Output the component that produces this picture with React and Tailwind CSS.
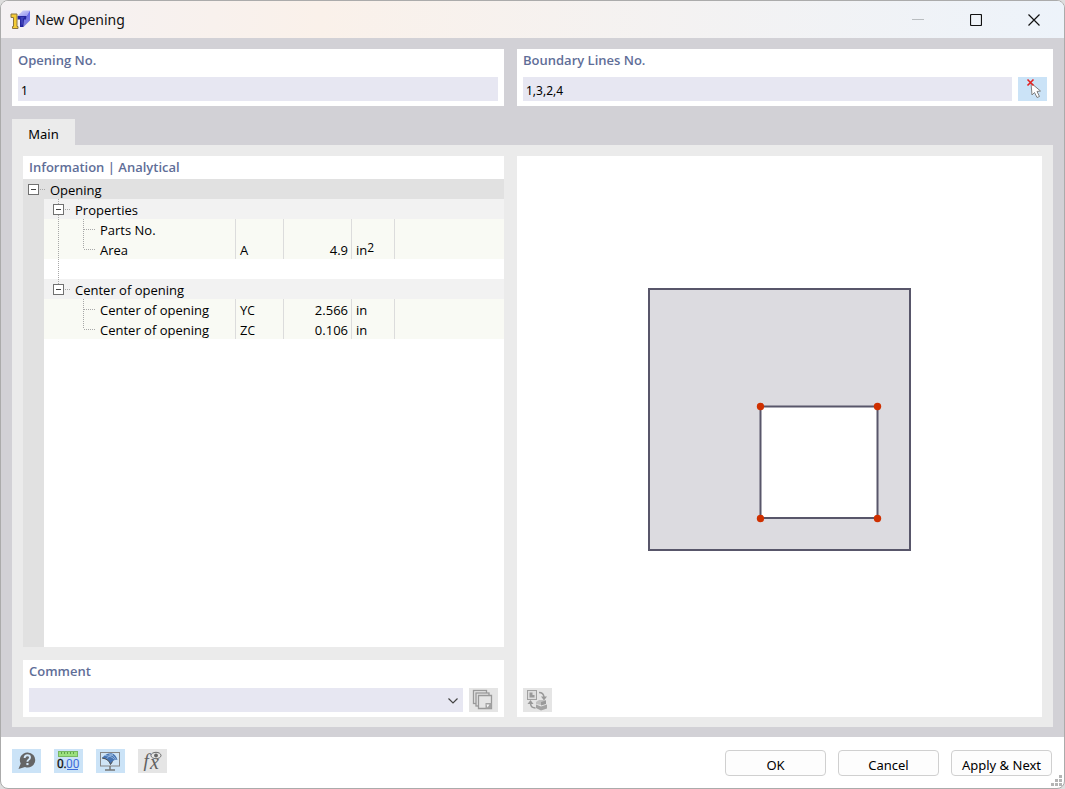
import React, { useState } from "react";

const LINE = "#a8a8a8";

function AppIcon() {
  return (
    <svg width="20" height="20" viewBox="0 0 20 20" aria-hidden="true">
      <defs>
        <linearGradient id="face" x1="0" y1="0" x2="1" y2="1">
          <stop offset="0" stopColor="#dcdcfb" />
          <stop offset="1" stopColor="#8c8dee" />
        </linearGradient>
        <linearGradient id="side" x1="0" y1="0" x2="0" y2="1">
          <stop offset="0" stopColor="#6163ea" />
          <stop offset="1" stopColor="#8586dc" />
        </linearGradient>
      </defs>
      <path d="M7.500 6 L13 0.500 H20 L16.500 6Z" fill="url(#face)" />
      <path d="M16.500 6 L20 0.500 V10.500 L13.500 17 L13.500 9Z" fill="url(#side)" />
      <path d="M7.500 6 H16.500 L16 9.500 H14 L13.500 17 H10 V9.500 H7.500Z" fill="#24249e" />
      <path d="M10.500 7 H14.500 L13 9 V14 L11.500 16Z" fill="#3e40b8" />
      <path d="M1 4 H7 V16.500 H8 V18.500 H2.500 V16.500 H3.500 V7.500 H1Z" fill="#f4cb35" stroke="#8a7440" strokeWidth="1" />
    </svg>
  );
}

function PickIcon() {
  return (
    <svg width="29" height="24" viewBox="0 0 29 24" aria-hidden="true">
      <path d="M13 6 L14 18 L16.500 15.500 L19 20.500 L21.500 19.500 L19 14.500 L22.500 14Z" fill="#fff" stroke="#808080" strokeWidth="1" />
      <path d="M9.500 2.500 L15.500 8.500 M15.500 2.500 L9.500 8.500" stroke="#e32222" strokeWidth="1.600" />
    </svg>
  );
}

function PagesIcon() {
  return (
    <svg width="29" height="24" viewBox="0 0 29 24" fill="#e5e5e5" stroke="#999" strokeWidth="1.300" aria-hidden="true">
      <rect x="4.500" y="2.500" width="13" height="13" />
      <rect x="7" y="5" width="13" height="13" />
      <path d="M9.500 7.500 H22.500 V20.500 H9.500Z" />
      <path d="M16.500 20.500 V15 H22.500 V20.500Z" fill="#a3a3a3" stroke="none" />
      <path d="M17.500 16.500 H20.500 L18.500 19.500Z" fill="#f8f8f8" stroke="none" />
    </svg>
  );
}

function SwapIcon() {
  return (
    <svg width="29" height="24" viewBox="0 0 29 24" aria-hidden="true">
      <rect x="4.500" y="2.500" width="9" height="9" fill="#ddd" stroke="#a0a0a0" />
      <path d="M6.500 4.500 V9.500 H11.500 V7 H9.500 V4.500Z" fill="#999" />
      <path d="M16 4.500 Q20.500 4.500 21 9" fill="none" stroke="#999" strokeWidth="1.500" />
      <path d="M18 8.500 H24 L21 12.500Z" fill="#999" />
      <path d="M12.500 20 Q8 20 7.500 15.500" fill="none" stroke="#999" strokeWidth="1.500" />
      <path d="M4.500 16 H10.500 L7.500 12Z" fill="#999" />
      <path d="M13 14 L16 12 H23 V15 L18 17 L13 16Z" fill="#c0c0c0" />
      <path d="M18 14 L23 12.500 V16 L18 17.500Z" fill="#999" />
      <path d="M13 16.500 L18 18.500 L24 16.500 V20.500 L18 22.500 L13 20Z" fill="#a3a3a3" />
    </svg>
  );
}

function HelpIcon() {
  return (
    <svg width="29" height="24" viewBox="0 0 29 24" aria-hidden="true">
      <path d="M15.500 3.500 a7.500 7.500 0 1 1 -2.500 14.500 L6.500 20 L8.700 14.500 A7.500 7.500 0 0 1 15.500 3.500Z" fill="#656565" />
      <path d="M12.600 9 Q12.800 6.300 15.400 6.300 Q18 6.300 18 8.600 Q18 10 16.600 10.800 Q15.400 11.500 15.400 12.800" fill="none" stroke="#d4e8f9" strokeWidth="1.900" />
      <rect x="14.400" y="14" width="2.100" height="2.100" fill="#d4e8f9" />
    </svg>
  );
}

function UnitsIcon() {
  return (
    <svg width="29" height="24" viewBox="0 0 29 24" aria-hidden="true">
      <rect x="4.500" y="2.500" width="19" height="5" fill="#9be07f" stroke="#78b862" />
      <path d="M7.500 3 V5 M10.500 3 V5 M13.500 3 V5 M16.500 3 V5 M19.500 3 V5" stroke="#5fa24a" />
      <g fontFamily="Roboto, sans-serif" fontSize="12">
        <text x="3" y="18.500" fill="#111" stroke="#111" strokeWidth="0.300">0</text>
        <text x="9.500" y="18.500" fill="#111" stroke="#111" strokeWidth="0.300">.</text>
        <text x="12" y="18.500" fill="#3d6bd9">00</text>
      </g>
      <path d="M13 20.500 H24" stroke="#3d6bd9" />
    </svg>
  );
}

function DisplayIcon() {
  return (
    <svg width="29" height="24" viewBox="0 0 29 24" aria-hidden="true">
      <rect x="4.500" y="3.500" width="19" height="13.500" fill="#cfe4f6" stroke="#858585" />
      <path d="M14 17 V20.500 M9 21 H19" stroke="#777" strokeWidth="1.500" />
      <path d="M6 9 Q10 4 15.500 4.300 Q20 5.500 21.500 11 Q18.500 10 16.500 12.500 L14.500 15.500 Q13 10 6 9Z" fill="#4674b3" />
      <path d="M9 6.500 Q16 7 18.500 10.500 M12.500 4.800 Q18 6 20 10.500 M10.500 9.800 Q13 6.500 17 5" fill="none" stroke="#b2cfee" strokeWidth="0.700" />
      <path d="M6 9 Q13 10 14.500 15.500 L16.500 12.500" fill="none" stroke="#4d4d4d" strokeWidth="1" />
    </svg>
  );
}

function FormulaIcon() {
  return (
    <svg width="29" height="24" viewBox="0 0 29 24" aria-hidden="true">
      <g fontFamily="Liberation Serif, serif" fontStyle="italic" fill="#606060">
        <text x="5.500" y="18" fontSize="19">f</text>
        <text x="12" y="20" fontSize="20">x</text>
      </g>
      <ellipse cx="18" cy="6.500" rx="5" ry="3.200" fill="#e5e5e5" stroke="#6a6a6a" />
      <circle cx="18" cy="6.500" r="1.900" fill="#666" />
    </svg>
  );
}

function IconButton({ label, active, children }) {
  return (
    <button
      type="button"
      aria-label={label}
      className={`h-6 w-[29px] shrink-0 ${active ? "bg-[#cbe3f7]" : "bg-[#e5e5e5]"}`}
    >
      {children}
    </button>
  );
}

function Field({ id, label, children }) {
  return (
    <section className="min-w-0 bg-white px-1.5 pb-[5px]">
      <label htmlFor={id} className="block h-7 font-['Open_Sans',sans-serif] text-[13px] leading-[23px] font-semibold text-[#5f6e98]">
        {label}
      </label>
      <div className="flex gap-1.5">{children}</div>
    </section>
  );
}

function TextBox({ id, initial }) {
  const [value, setValue] = useState(initial);
  return (
    <input
      id={id}
      value={value}
      onChange={(e) => setValue(e.target.value)}
      className="h-6 min-w-0 flex-1 bg-[#e7e7f2] px-[3px] pt-0.5 text-[12px] text-black outline-none"
    />
  );
}

function Toggle({ label, above, below }) {
  return (
    <button type="button" aria-label={`Collapse ${label}`} className="h-5 w-[18px]">
      <svg width="18" height="20" viewBox="0 0 18 20" fill="none" className="block">
        <g stroke={LINE} strokeDasharray="1 1">
          {above && <path d="M5.500 0 V5" />}
          {below && <path d="M5.500 16 V20" />}
          <path d="M12 10.500 H18" />
        </g>
        <rect x="0.500" y="5.500" width="10" height="10" fill="#fff" stroke="#707070" />
        <path d="M3 10.500 H8" stroke="#444" />
      </svg>
    </button>
  );
}

function Branch({ trunk, leaf, last }) {
  return (
    <svg width="52" height="20" viewBox="0 0 52 20" fill="none" stroke={LINE} strokeDasharray="1 1" className="block">
      {trunk && <path d="M14.500 0 V20" />}
      {leaf && <path d={last ? "M39.500 0 V10" : "M39.500 0 V20"} />}
      {leaf && <path d="M40 10.500 H52" />}
    </svg>
  );
}

function Gutter() {
  return <td className="bg-[#e1e1e1]" />;
}

function GroupRow({ label, above, below }) {
  return (
    <tr className="h-5 bg-[#f2f2f2]">
      <Gutter />
      <td colSpan="5">
        <div className="flex h-5 gap-1 pl-[9px]">
          <Toggle label={label} above={above} below={below} />
          <span className="leading-[22px]">{label}</span>
        </div>
      </td>
    </tr>
  );
}

function LeafRow({ label, symbol, value, unit, trunk, last }) {
  return (
    <tr className="h-5 bg-[#f9faf4] leading-[22px]">
      <Gutter />
      <td className="border-r border-[#dcdcdc]">
        <div className="flex h-5 gap-1">
          <Branch trunk={trunk} leaf last={last} />
          <span className="whitespace-nowrap">{label}</span>
        </div>
      </td>
      <td className="border-r border-[#dcdcdc] pl-1"><div className="h-5">{symbol}</div></td>
      <td className="border-r border-[#dcdcdc] pr-[3px] text-right"><div className="h-5">{value}</div></td>
      <td className="border-r border-[#dcdcdc] pl-1"><div className="h-5">{unit}</div></td>
      <td />
    </tr>
  );
}

function PropertyTree() {
  return (
    <table className="w-full table-fixed border-separate border-spacing-0 font-['Open_Sans',sans-serif] text-[13px]">
      <colgroup>
        <col className="w-[21px]" />
        <col className="w-48" />
        <col className="w-12" />
        <col className="w-[68px]" />
        <col className="w-[43px]" />
        <col />
      </colgroup>
      <tbody>
        <tr className="h-5 bg-[#e1e1e1]">
          <td colSpan="6">
            <div className="flex h-5 gap-1 pl-[5px]">
              <Toggle label="Opening" />
              <span className="leading-[22px]">Opening</span>
            </div>
          </td>
        </tr>
        <GroupRow label="Properties" above below />
        <LeafRow label="Parts No." trunk />
        <LeafRow
          label="Area"
          symbol="A"
          value="4.9"
          unit={<>in<span className="align-[3px] text-[12px] leading-none">2</span></>}
          trunk
          last
        />
        <tr className="h-5">
          <Gutter />
          <td colSpan="5"><Branch trunk /></td>
        </tr>
        <GroupRow label="Center of opening" above />
        <LeafRow label="Center of opening" symbol={<>Y<span className="text-[12px]">C</span></>} value="2.566" unit="in" />
        <LeafRow label="Center of opening" symbol={<>Z<span className="text-[12px]">C</span></>} value="0.106" unit="in" last />
      </tbody>
    </table>
  );
}

function Preview() {
  const corners = [[112, 118], [229, 118], [112, 230], [229, 230]];
  return (
    <svg width="263" height="263" viewBox="0 0 263 263" role="img" aria-label="Opening in surface">
      <rect x="1" y="1" width="261" height="261" fill="#dcdbe0" stroke="#58566a" strokeWidth="2" />
      <rect x="112.500" y="118.500" width="117" height="111.500" fill="#fff" stroke="#58566a" strokeWidth="2" />
      {corners.map(([x, y]) => (
        <circle key={`${x}-${y}`} cx={x + 0.5} cy={y + 0.5} r="3.700" fill="#cf3000" />
      ))}
    </svg>
  );
}

function DialogButton({ children }) {
  return (
    <button type="button" className="h-[26px] w-[101px] rounded border border-[#d0d0d0] bg-[#fdfdfd] pt-1 text-[13px] leading-5">
      {children}
    </button>
  );
}

function TitleBar() {
  return (
    <header className="flex h-[37px] items-center bg-linear-to-r from-[#f4f1f3] via-[#faf1ea] via-30% to-[#edf3fa] pl-[9px]">
      <AppIcon />
      <h1 className="ml-[5px] flex-1 text-[14px] text-[#111]">New Opening</h1>
      <div className="flex self-stretch pr-px">
        <button type="button" aria-label="Minimize" disabled className="flex w-[58px] items-center justify-center">
          <svg width="12" height="12"><path d="M0 5.500 H12" stroke="#b9bdc0" /></svg>
        </button>
        <button type="button" aria-label="Maximize" className="flex w-[58px] items-center justify-center">
          <svg width="12" height="12"><rect x="0.500" y="0.500" width="11" height="11" rx="1" fill="none" stroke="#111" strokeWidth="1.200" /></svg>
        </button>
        <button type="button" aria-label="Close" className="flex w-[58px] items-center justify-center">
          <svg width="12" height="12"><path d="M0.500 0.500 L11.500 11.500 M11.500 0.500 L0.500 11.500" stroke="#111" strokeWidth="1.200" /></svg>
        </button>
      </div>
    </header>
  );
}

export default function App() {
  return (
    <div className="flex min-h-screen flex-col bg-[#dedede] font-['Noto_Sans','Open_Sans',sans-serif] text-black">
      <div className="relative flex flex-1 flex-col overflow-hidden rounded-lg border border-[#ababab] bg-white">
        <TitleBar />
        <main className="flex flex-1 flex-col bg-[#d2d1d6] px-[11px] pt-[11px] pb-2.5">
          <div className="grid grid-cols-[492fr_536fr] gap-[13px]">
            <Field id="opening" label="Opening No.">
              <TextBox id="opening" initial="1" />
            </Field>
            <Field id="boundary" label="Boundary Lines No.">
              <TextBox id="boundary" initial="1,3,2,4" />
              <IconButton label="Select boundary lines" active><PickIcon /></IconButton>
            </Field>
          </div>
          <div role="tablist" className="mt-[13px] flex">
            <button type="button" role="tab" aria-selected="true" className="h-[26px] w-[63px] bg-[#ebebeb] pt-1.5 text-[13px]">
              Main
            </button>
          </div>
          <div role="tabpanel" className="grid flex-1 grid-cols-[481fr_525fr] gap-[13px] bg-[#ebebeb] px-[11px] pt-[11px] pb-2.5">
            <div className="flex min-w-0 flex-col gap-[13px]">
              <section className="flex flex-1 flex-col bg-white">
                <h2 className="h-[23px] px-1.5 font-['Open_Sans',sans-serif] text-[13px] leading-[23px] font-semibold text-[#5f6e98]">
                  Information | Analytical
                </h2>
                <PropertyTree />
                <div className="w-[21px] flex-1 bg-[#e1e1e1]" />
              </section>
              <Field id="comment" label="Comment">
                <div className="relative min-w-0 flex-1">
                  <select id="comment" className="block h-6 w-full appearance-none bg-[#e7e7f2] px-1 text-[13px] outline-none">
                    <option value="" />
                  </select>
                  <svg width="10" height="6" className="pointer-events-none absolute top-2.5 right-[5px]" fill="none">
                    <path d="M0.500 0.500 L5 5 L9.500 0.500" stroke="#444" strokeWidth="1.200" />
                  </svg>
                </div>
                <IconButton label="Comment library"><PagesIcon /></IconButton>
              </Field>
            </div>
            <section className="flex min-w-0 flex-col gap-[5px] bg-white px-1.5 pb-[5px]">
              <div className="flex flex-1 items-center justify-center"><Preview /></div>
              <IconButton label="Switch view"><SwapIcon /></IconButton>
            </section>
          </div>
        </main>
        <footer className="flex h-[51px] items-start justify-between pt-3 pr-3 pl-[11px]">
          <div className="flex gap-[13px]">
            <IconButton label="Help" active><HelpIcon /></IconButton>
            <IconButton label="Units and decimal places" active><UnitsIcon /></IconButton>
            <IconButton label="Display options" active><DisplayIcon /></IconButton>
            <IconButton label="Formula parameters"><FormulaIcon /></IconButton>
          </div>
          <div className="flex gap-3 pt-px">
            <DialogButton>OK</DialogButton>
            <DialogButton>Cancel</DialogButton>
            <DialogButton>Apply &amp; Next</DialogButton>
          </div>
        </footer>
        <svg width="11" height="11" className="absolute right-0.5 bottom-0.5" fill="#b4b4b4" aria-hidden="true">
          <path d="M8 0h3v3h-3z M4 4h3v3h-3z M8 4h3v3h-3z M0 8h3v3h-3z M4 8h3v3h-3z M8 8h3v3h-3z" />
        </svg>
      </div>
    </div>
  );
}
